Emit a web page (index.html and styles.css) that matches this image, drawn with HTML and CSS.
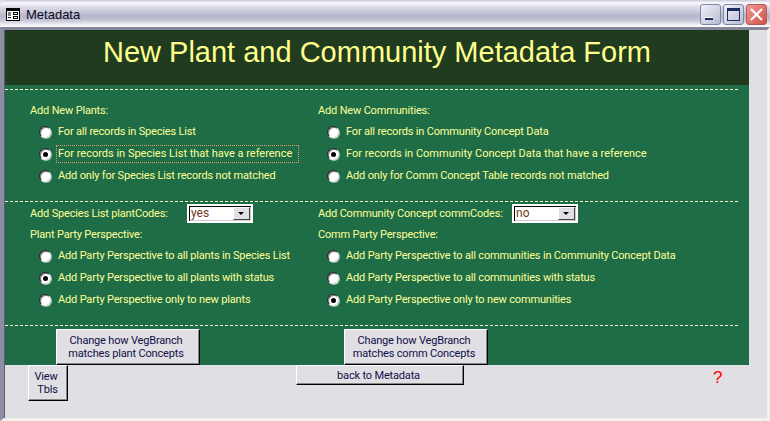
FILE: index.html
```html
<!DOCTYPE html>
<html lang="en">
<head>
<meta charset="utf-8">
<title>Metadata</title>
<link rel="stylesheet" href="styles.css">
</head>
<body>
<div class="window">
  <div class="titlebar">
    <svg class="app-icon" width="14" height="13" viewBox="0 0 14 13"><rect x="0.5" y="0.5" width="13" height="12" fill="#fff" stroke="#000"/><rect x="1" y="1" width="12" height="2" fill="#000"/><path d="M2 5h3M2 7h3M2 9.500h3" stroke="#000"/><rect x="7.500" y="4.500" width="4" height="2" fill="none" stroke="#000"/><rect x="7.500" y="8.500" width="4" height="2" fill="none" stroke="#000"/></svg>
    <span class="title-text">Metadata</span>
    <div class="win-buttons">
      <div class="win-btn"><svg width="21" height="21" viewBox="0 0 21 21"><rect x="5" y="13" width="8" height="3" fill="#1f2a5c"/><rect x="5" y="13" width="8" height="1" fill="#fff"/></svg></div>
      <div class="win-btn"><svg width="21" height="21" viewBox="0 0 21 21"><rect x="4.500" y="4.500" width="12" height="12" fill="none" stroke="#1f2a5c"/><rect x="4" y="4" width="13" height="3" fill="#1f2a5c"/></svg></div>
      <div class="win-btn close"><svg width="21" height="21" viewBox="0 0 21 21"><path d="M5 5l11 11M16 5L5 16" stroke="#fff" stroke-width="2.200"/></svg></div>
    </div>
  </div>
  <div class="frame">
    <div class="form">
      <header class="form-head"><h1>New Plant and Community Metadata Form</h1></header>
      <main class="form-body">
        <section class="band band-one">
          <div class="col">
            <div class="label">Add New Plants:</div>
            <div class="radios">
              <div class="radio"><i class="dot"></i><span>For all records in Species List</span></div>
              <div class="radio"><i class="dot on"></i><span class="focus wide">For records in Species List that have a reference</span></div>
              <div class="radio"><i class="dot"></i><span>Add only for Species List records not matched</span></div>
            </div>
          </div>
          <div class="col">
            <div class="label">Add New Communities:</div>
            <div class="radios">
              <div class="radio"><i class="dot"></i><span>For all records in Community Concept Data</span></div>
              <div class="radio"><i class="dot on"></i><span class="wide">For records in Community Concept Data that have a reference</span></div>
              <div class="radio"><i class="dot"></i><span>Add only for Comm Concept Table records not matched</span></div>
            </div>
          </div>
        </section>
        <section class="band band-two">
          <div class="col">
            <div class="combo-row"><span class="combo-label plant-label">Add Species List plantCodes:</span><div class="combo"><span class="combo-value">yes</span><span class="combo-arrow"></span></div></div>
            <div class="label second">Plant Party Perspective:</div>
            <div class="radios tight">
              <div class="radio"><i class="dot"></i><span>Add Party Perspective to all plants in Species List</span></div>
              <div class="radio"><i class="dot on"></i><span>Add Party Perspective to all plants with status</span></div>
              <div class="radio"><i class="dot"></i><span>Add Party Perspective only to new plants</span></div>
            </div>
          </div>
          <div class="col">
            <div class="combo-row"><span class="combo-label comm-label">Add Community Concept commCodes:</span><div class="combo"><span class="combo-value">no</span><span class="combo-arrow"></span></div></div>
            <div class="label second">Comm Party Perspective:</div>
            <div class="radios tight">
              <div class="radio"><i class="dot"></i><span>Add Party Perspective to all communities in Community Concept Data</span></div>
              <div class="radio"><i class="dot"></i><span>Add Party Perspective to all communities with status</span></div>
              <div class="radio"><i class="dot on"></i><span>Add Party Perspective only to new communities</span></div>
            </div>
          </div>
        </section>
        <section class="band-three">
          <div class="btn match match-plant">Change how VegBranch<br>matches plant Concepts</div>
          <div class="btn match match-comm">Change how VegBranch<br>matches comm Concepts</div>
        </section>
      </main>
      <footer class="form-foot">
        <div class="btn view">View<br><span class="tbls">Tbls</span></div>
        <div class="btn back">back to Metadata</div>
        <div class="help">?</div>
      </footer>
    </div>
    <div class="strip"></div>
  </div>
</div>
</body>
</html>
```
FILE: styles.css
```css
* { box-sizing: border-box; }
html, body { margin: 0; padding: 0; }
body {
  width: 770px;
  height: 421px;
  overflow: hidden;
  background: #e0dfe3;
  font-family: Roboto, "Liberation Sans", sans-serif;
  font-size: 11px;
  letter-spacing: -0.17px;
}
.window { width: 770px; height: 421px; display: flex; flex-direction: column; }
.titlebar {
  height: 27px;
  flex: none;
  display: flex;
  align-items: center;
  padding: 2px 3px 0 6px;
  border-radius: 6px 6px 0 0;
  background: linear-gradient(#c9c9d9 0, #fbfbfd 3px, #dddde8 7px, #b6b6cb 16px, #c3c3d4 20px, #f2f2f7 25px, #fff 27px);
}
.app-icon { flex: none; }
.title-text {
  margin-left: 6px;
  font-family: "Liberation Sans", sans-serif;
  font-size: 13px;
  letter-spacing: 0;
  color: #0a0a1e;
}
.win-buttons { margin-left: auto; display: flex; gap: 2px; }
.win-btn {
  width: 21px;
  height: 21px;
  border: 1px solid #7f86a8;
  border-radius: 3px;
  background: linear-gradient(135deg, #f0f0f6, #b8bcd2);
}
.win-btn svg { display: block; margin: -1px; }
.win-btn.close { background: linear-gradient(135deg, #ee9a92, #d2514a); border-color: #b05a5a; }
.frame {
  flex: 1;
  display: flex;
  background: #e0dfe3;
  border-top: 3px solid #85859a;
  border-left: 4px solid #8d8da4;
  border-right: 3px solid #f2f1ea;
  border-bottom: 3px solid #f2f1ea;
  box-shadow: 0 1px 0 #72728a;
}
.form { width: 745px; border-left: 1px solid #5c5c70; display: flex; flex-direction: column; }
.strip { flex: 1; }
.form-head {
  height: 55px;
  flex: none;
  background: #213b1f;
  display: flex;
  justify-content: center;
}
h1 {
  margin: 0;
  font-family: "Liberation Sans", sans-serif;
  font-weight: 400;
  font-size: 29px;
  line-height: 44px;
  letter-spacing: 0;
  color: #ffff8e;
  white-space: nowrap;
}
.form-body {
  height: 280px;
  flex: none;
  background: #1e6d46;
  color: #ffff99;
  padding-top: 4px;
}
.band {
  display: grid;
  grid-template-columns: 288px 1fr;
  padding-left: 25px;
  border-top: 1px dashed #fffdd0;
  width: 733px;
}
.band-one { height: 112px; padding-top: 13px; }
.band-two { height: 124px; padding-top: 1px; }
.band-three {
  border-top: 1px dashed #fffdd0;
  width: 733px;
  height: 40px;
  display: flex;
  padding-top: 3px;
}
.label { height: 16px; line-height: 16px; white-space: nowrap; }
.label.second { margin-top: 4px; }
.radios { margin-top: 2px; padding-left: 9px; }
.radio { height: 22px; display: flex; align-items: center; white-space: nowrap; }
.radio span { margin-left: 7px; line-height: 14px; }
.radio .wide { letter-spacing: 0; }
.radio .focus { outline: 1px dotted #e89a6a; outline-offset: 1px; padding-right: 5px; }
.dot {
  width: 12px;
  height: 12px;
  flex: none;
  border-radius: 50%;
  background: #fff;
  border: 1px solid;
  border-color: #222 #e8e8e8 #e8e8e8 #222;
  box-shadow: inset 1px 1px 0 #777, 1px 1px 0 rgba(255,255,255,.6);
  position: relative;
}
.dot.on::after {
  content: "";
  position: absolute;
  left: 2.500px;
  top: 2.500px;
  width: 5px;
  height: 5px;
  border-radius: 50%;
  background: #000;
}
.combo-row { display: flex; align-items: center; height: 20px; white-space: nowrap; }
.plant-label { width: 157px; }
.comm-label { width: 194px; }
.combo {
  width: 66px;
  height: 19px;
  background: #fff;
  border: 2px solid #fff;
  box-shadow: inset 1px 1px 0 #000, inset -1px -1px 0 #ccc;
  display: flex;
  align-items: center;
  padding: 1px;
}
.combo-value {
  flex: 1;
  padding-left: 1px;
  font-size: 12px;
  line-height: 14px;
  letter-spacing: 0;
  color: #6b3b1a;
}
.combo-arrow {
  width: 17px;
  height: 13px;
  background: #e0dfe3;
  border: 1px solid;
  border-color: #fff #444 #444 #fff;
  position: relative;
}
.combo-arrow::after {
  content: "";
  position: absolute;
  left: 4px;
  top: 4px;
  border: 3.500px solid transparent;
  border-top: 3.500px solid #000;
  border-bottom: 0;
}
.btn {
  background: #e0dfe3;
  border: 1px solid;
  border-color: #fff #000 #000 #fff;
  box-shadow: inset -1px -1px 0 #888;
  color: #10104a;
  text-align: center;
  font-size: 11px;
  line-height: 13px;
  white-space: nowrap;
}
.match { width: 144px; height: 36px; padding: 4px 4px 0 0; flex: none; }
.match-plant { margin-left: 51px; }
.match-comm { margin-left: 144px; }
.form-foot { flex: 1; display: flex; align-items: flex-start; }
.view { width: 40px; height: 36px; margin-left: 23px; padding-top: 4px; padding-right: 4px; }
.tbls { margin-left: 3px; }
.back { width: 168px; height: 20px; margin-left: 228px; line-height: 19px; padding-right: 3px; }
.help {
  margin-left: 249px;
  margin-top: 3px;
  font-family: "Liberation Sans", sans-serif;
  font-size: 17px;
  line-height: 19px;
  letter-spacing: 0;
  color: #ff0000;
}
```
